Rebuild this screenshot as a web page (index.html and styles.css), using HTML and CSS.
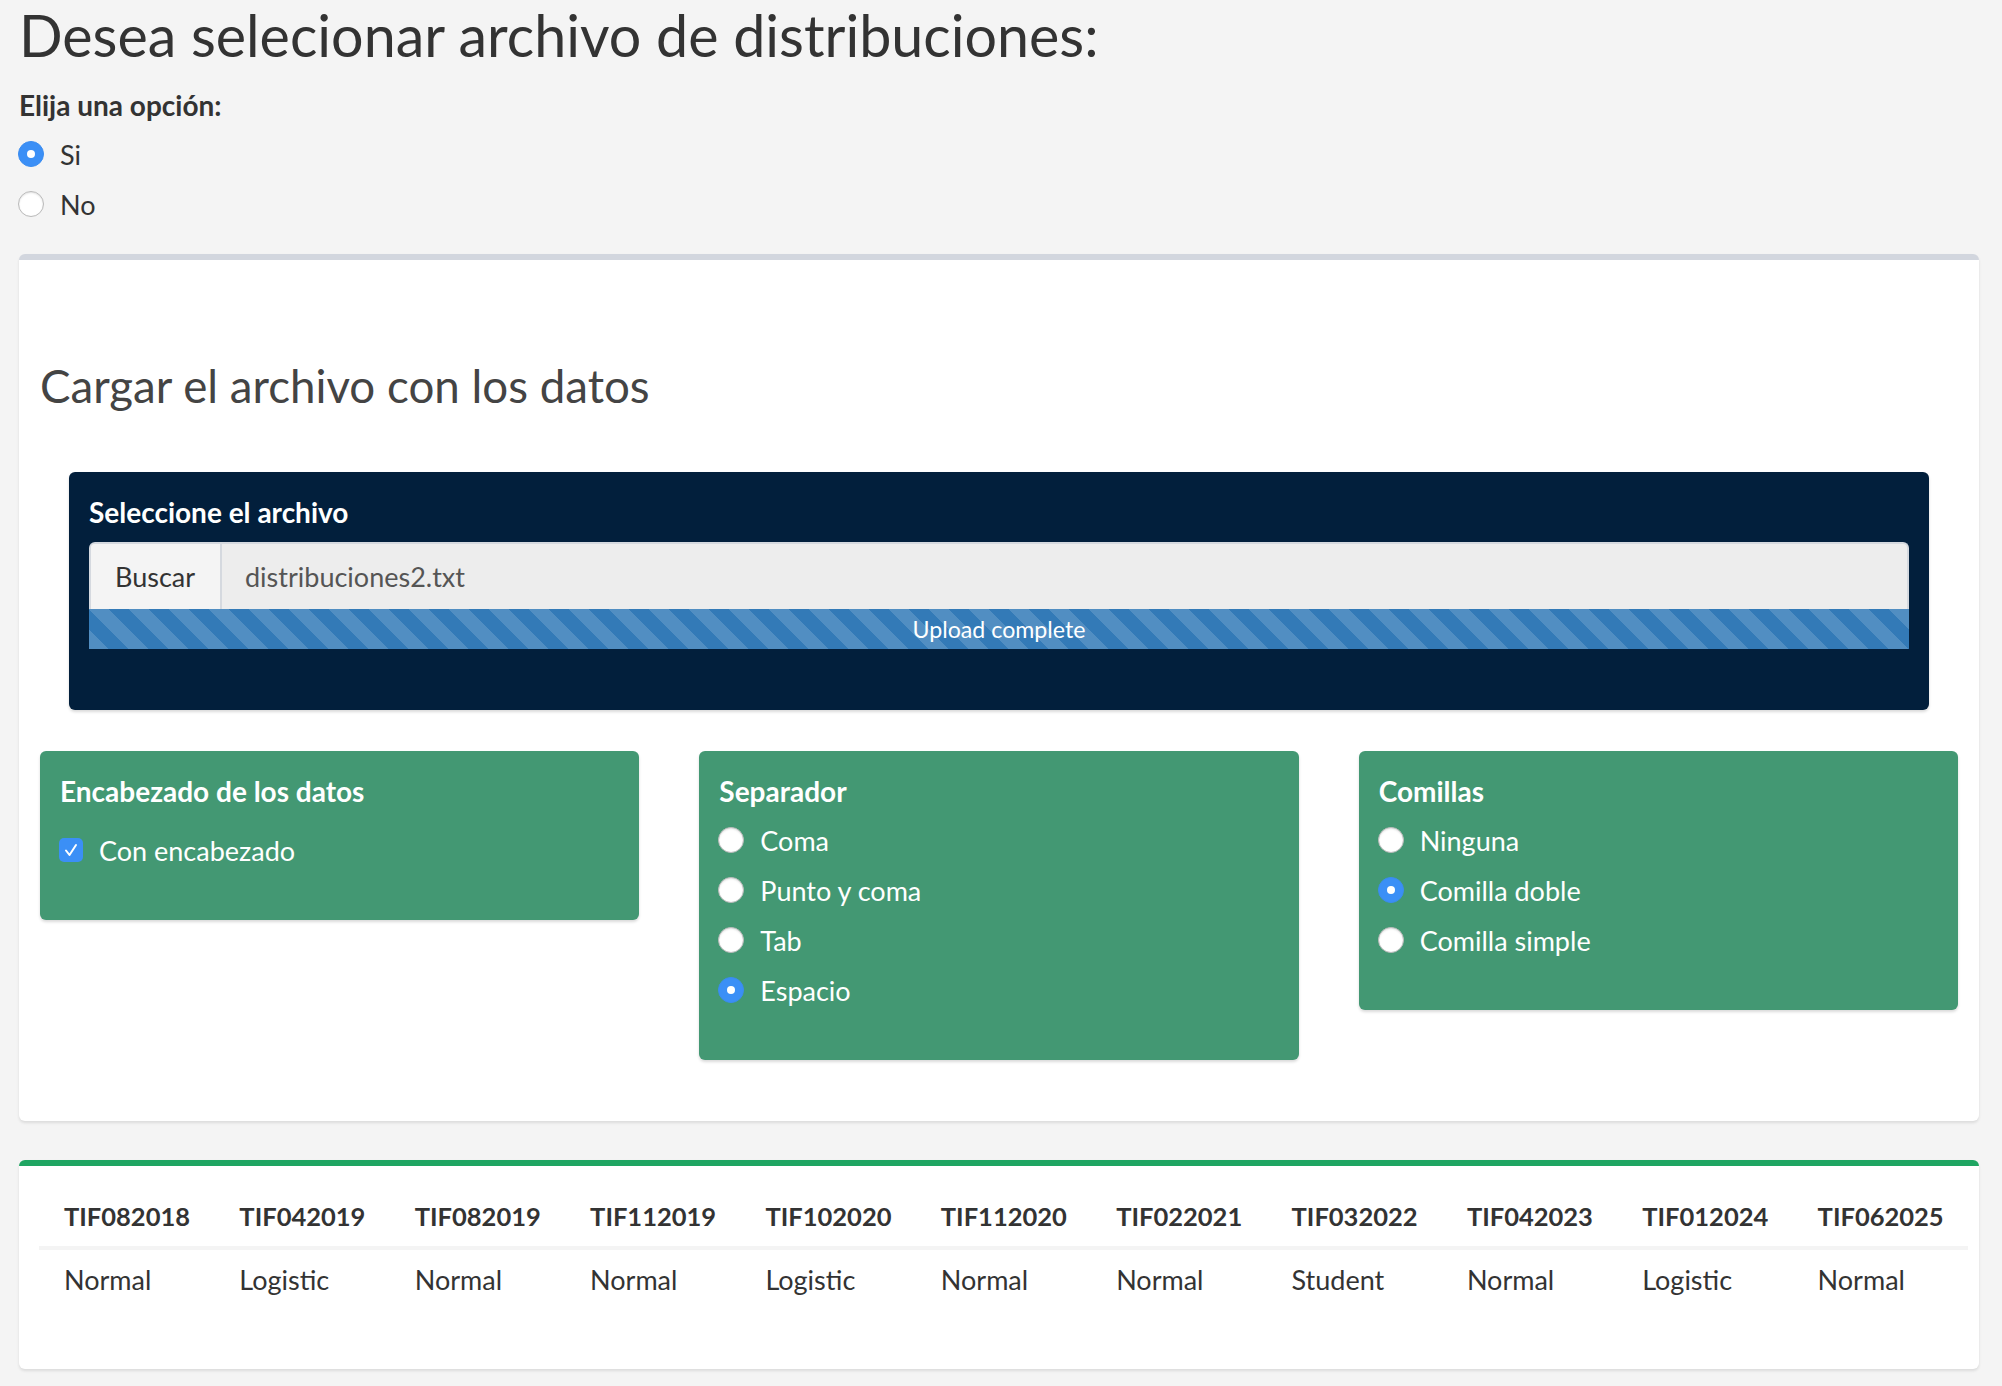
FILE: index.html
```html
<!DOCTYPE html>
<html lang="es">
<head>
<meta charset="utf-8">
<title>Distribuciones</title>
<link rel="stylesheet" href="styles.css">
</head>
<body>
<div class="page">
  <h1 class="title">Desea selecionar archivo de distribuciones:</h1>

  <div class="choice">
    <div class="field-label">Elija una opción:</div>
    <div class="radio-list">
      <label class="radio"><span class="rb rb-on"></span><span>Si</span></label>
      <label class="radio"><span class="rb"></span><span>No</span></label>
    </div>
  </div>

  <section class="box box-default">
    <h3 class="box-heading">Cargar el archivo con los datos</h3>

    <div class="upload-panel">
      <div class="panel-label">Seleccione el archivo</div>
      <div class="input-group">
        <span class="btn-browse">Buscar</span>
        <span class="filename">distribuciones2.txt</span>
      </div>
      <div class="progress">Upload complete</div>
    </div>

    <div class="opts">
      <div class="opt-box opt-header">
        <div class="opt-title">Encabezado de los datos</div>
        <label class="check"><span class="cb"><svg viewBox="0 0 24 24" width="24" height="24"><polyline points="7,12.5 10.5,17 17,7" fill="none" stroke="#fff" stroke-width="2" stroke-linecap="round" stroke-linejoin="round"/></svg></span><span>Con encabezado</span></label>
      </div>

      <div class="opt-box">
        <div class="opt-title">Separador</div>
        <label class="radio"><span class="rb"></span><span>Coma</span></label>
        <label class="radio"><span class="rb"></span><span>Punto y coma</span></label>
        <label class="radio"><span class="rb"></span><span>Tab</span></label>
        <label class="radio"><span class="rb rb-on"></span><span>Espacio</span></label>
      </div>

      <div class="opt-box">
        <div class="opt-title">Comillas</div>
        <label class="radio"><span class="rb"></span><span>Ninguna</span></label>
        <label class="radio"><span class="rb rb-on"></span><span>Comilla doble</span></label>
        <label class="radio"><span class="rb"></span><span>Comilla simple</span></label>
      </div>
    </div>
  </section>

  <section class="box box-success">
    <table class="data">
      <thead>
        <tr>
          <th>TIF082018</th><th>TIF042019</th><th>TIF082019</th><th>TIF112019</th><th>TIF102020</th><th>TIF112020</th><th>TIF022021</th><th>TIF032022</th><th>TIF042023</th><th>TIF012024</th><th>TIF062025</th>
        </tr>
      </thead>
      <tbody>
        <tr>
          <td>Normal</td><td>Logistic</td><td>Normal</td><td>Normal</td><td>Logistic</td><td>Normal</td><td>Normal</td><td>Student</td><td>Normal</td><td>Logistic</td><td>Normal</td>
        </tr>
      </tbody>
    </table>
  </section>
</div>
</body>
</html>
```

FILE: styles.css
```css
html, body {
  margin: 0;
  padding: 0;
  background: #f4f4f4;
}

body {
  font-family: Lato, "Liberation Sans", sans-serif;
  font-size: 27px;
  color: #333;
}

.page {
  padding: 0 23px 17px 19px;
}

.title {
  margin: 0;
  font-size: 57.4px;
  font-weight: 400;
  line-height: 69px;
  color: #333;
}

.choice {
  padding-top: 16px;
}

.field-label {
  font-size: 28px;
  font-weight: 700;
  line-height: 40px;
}

.radio-list {
  margin-top: 4px;
}

.radio,
.check {
  display: flex;
  align-items: center;
  height: 50px;
  gap: 16px;
}

.rb {
  box-sizing: border-box;
  width: 26px;
  height: 26px;
  margin-left: -1px;
  border-radius: 50%;
  background: #fff;
  border: 1px solid #b9b9b9;
  box-shadow: inset 0 1px 2px rgba(0, 0, 0, 0.12);
  flex: none;
  position: relative;
}

.rb-on {
  background: #3b8ff6;
  border-color: #3a8cf0;
  box-shadow: none;
}

.rb-on::after {
  content: "";
  position: absolute;
  left: 50%;
  top: 50%;
  width: 8px;
  height: 8px;
  margin: -4px 0 0 -4px;
  border-radius: 50%;
  background: #fff;
}

.box {
  background: #fff;
  border-radius: 6px;
  box-shadow: 0 2px 3px rgba(0, 0, 0, 0.1);
}

.box-default {
  margin-top: 25px;
  border-top: 6px solid #d2d6de;
  padding: 96px 20px 61px;
}

.box-heading {
  margin: 0 0 0 1px;
  font-size: 45.7px;
  font-weight: 400;
  line-height: 60px;
  color: #444;
}

.upload-panel {
  margin: 56px 30px 0;
  padding: 20px 20px 61px;
  background: #021f3c;
  border-radius: 6px;
  box-shadow: 0 2px 3px rgba(0, 0, 0, 0.15);
  color: #fff;
}

.panel-label {
  font-size: 28px;
  font-weight: 700;
  line-height: 40px;
}

.input-group {
  display: flex;
  margin-top: 10px;
  height: 67px;
  box-sizing: border-box;
  border: 2px solid #d5d9df;
  border-bottom: 0;
  border-radius: 6px 6px 0 0;
  background: #ededed;
  color: #555;
}

.btn-browse {
  display: flex;
  align-items: center;
  box-sizing: border-box;
  width: 131px;
  padding-left: 24px;
  background: #f4f4f4;
  border-right: 2px solid #d5d9df;
  border-radius: 4px 0 0 0;
  color: #333;
}

.filename {
  display: flex;
  align-items: center;
  padding-left: 23px;
}

.progress {
  height: 40px;
  line-height: 40px;
  text-align: center;
  font-size: 23.2px;
  color: #fff;
  background-color: #337ab7;
  background-image: linear-gradient(45deg, rgba(255, 255, 255, 0.15) 25%, transparent 25%, transparent 50%, rgba(255, 255, 255, 0.15) 50%, rgba(255, 255, 255, 0.15) 75%, transparent 75%, transparent);
  background-size: 40px 40px;
}

.opts {
  display: grid;
  grid-template-columns: 1fr 1fr 1fr;
  column-gap: 60px;
  align-items: start;
  margin: 41px 1px 0;
}

.opt-box {
  background: #439873;
  border-radius: 6px;
  box-shadow: 0 2px 3px rgba(0, 0, 0, 0.15);
  padding: 20px 20px 45px;
  color: #fff;
}

.opt-title {
  font-size: 28px;
  font-weight: 700;
  line-height: 40px;
  margin-bottom: 4px;
}

.check {
  margin-top: 14px;
}

.cb {
  width: 24px;
  height: 24px;
  margin-left: -1px;
  border-radius: 5px;
  background: #3b8ff6;
  flex: none;
  display: flex;
}

.box-success {
  margin-top: 39px;
  border-top: 6px solid #1fa562;
  padding: 0 11px 49px 20px;
}

.data {
  border-collapse: collapse;
  table-layout: fixed;
  width: 100%;
}

.data th,
.data td {
  text-align: left;
  padding: 0 0 0 25px;
  line-height: 40px;
  white-space: nowrap;
}

.data th {
  font-size: 25.5px;
  font-weight: 700;
  padding-top: 30px;
  padding-bottom: 10px;
  border-bottom: 4px solid #f4f4f4;
}

.data td {
  padding-top: 10px;
  padding-bottom: 20px;
}
```
